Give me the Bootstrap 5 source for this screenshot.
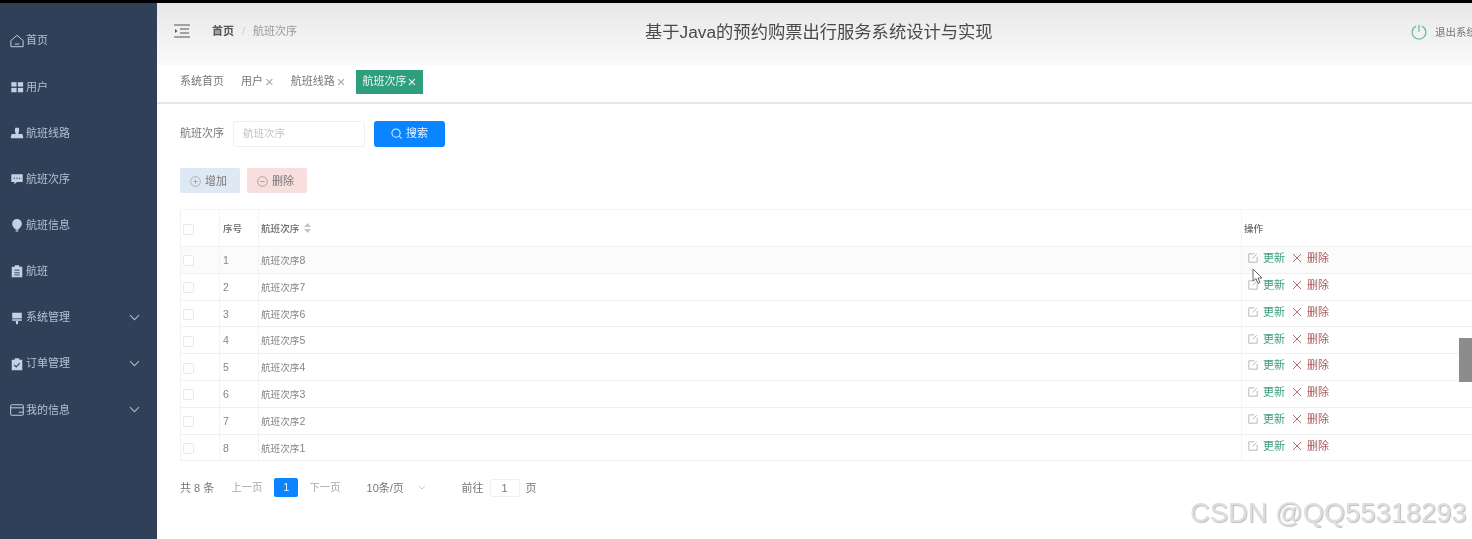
<!DOCTYPE html>
<html lang="zh"><head><meta charset="utf-8"><title>航班次序</title>
<link href="https://cdn.jsdelivr.net/npm/bootstrap@5.3.0/dist/css/bootstrap.min.css" rel="stylesheet">
<style>
html,body{height:539px;overflow:hidden;background:#000}
body{font-family:"Liberation Sans","Noto Sans CJK SC",sans-serif;font-size:11px;color:#6e6e6e;padding-top:3px}
.shell{height:536px;background:#fff;position:relative;overflow:hidden;filter:blur(.35px)}
.side{width:157px;flex:none;background:#2f4058;padding-top:14.6px;color:#b4c1d3}
.side-item{height:46.15px;padding-left:10px;gap:2px}
.side-item svg.ic{width:14px;height:14px;flex:none;color:#c5d1e2}
.side-item .chev{margin-left:auto;margin-right:17px;width:11px;height:7px;color:#a9b6c9}
.main{min-width:0;flex:1 1 0}
.hd{height:62px;background:linear-gradient(#e7e7e7,#fafafa);padding:0 0 6px 17px;flex:none}
.hd-left{width:471px;flex:none}
.crumb-a{font-weight:700;color:#555;margin-left:22px}
.crumb-s{color:#ccc;margin:0 8px}
.crumb-b{color:#9a9a9a}
.ttl{font-size:17.3px;color:#4a4a4a;white-space:nowrap;padding-top:4px}
.logout{width:61px;flex:none;gap:8px;white-space:nowrap;color:#777;font-size:10.5px;padding-top:4px}
.logout svg{flex:none;margin-top:-2px}
.tabsbar{height:39px;border-bottom:2px solid #e6e6e6;padding:5px 0 0 23px;flex:none;color:#777}
.tabi{margin-right:17px;height:24px;padding-bottom:2px}
.tabi b{font-weight:400;color:#aaa;margin-left:2px;font-size:15px;line-height:1}
.tabon{background:#2f9e7c;color:#e6f5f0;padding:0 7px 2px 7px;margin:0 0 0 -7px}
.tabon b{color:#e6f5f0;margin-left:1px}
.body-wrap{padding:17px 0 0 23px}
.lab{margin-right:9px;color:#777;padding-bottom:1px}
.inp{width:132px;height:26px;border:1px solid #f0f0f0;border-radius:3px;padding:0 0 1px 9px;color:#c6c6c6;font-size:10.5px}
.sbtn{width:71px;height:26px;margin-left:9px;background:#0a84ff;color:#e9f3ff;border-radius:3px;gap:4px;padding-bottom:1px}
.abtn{width:60px;height:25px;margin-top:21px;border-radius:2px;gap:4px;color:#777;padding:1px 3px 0 0}
.abtn svg{width:11px;height:11px}
.a-add{background:#dfe9f5}
.a-del{background:#f8dfdd;margin-left:7px}
.gt{margin:16px 0 0;table-layout:fixed;width:1320px;font-size:9.6px;border-left:1px solid #f2f2f2;border-top:1px solid #f4f4f4}
.gt td,.gt th{padding:0 0 0 2px;border-bottom:1px solid #f0f0f0;border-right:1px solid #f4f4f4;vertical-align:middle;color:#858585;font-weight:400;box-shadow:none}
.gt th{height:37px;color:#6a6a6a;font-weight:500;padding-top:2px}
.gt td{height:26.8px;padding-top:2px}
.gt th:nth-child(2),.gt td:nth-child(2){padding-left:3px}
.gt td:nth-child(2),.gt .dg{font-size:10.5px}
.gt tr.hov td{background:#fbfbfb}
.gt td.act{padding:0 0 3px 6px;font-size:11px}
.cb{display:block;width:11px;height:11px;border:1px solid #e9e9e9;border-radius:2px;background:#fff}
.sortm{display:inline-block;margin-left:5px;vertical-align:-1px}
.up{color:#3c9e80}.dn{color:#a9595c}
.act svg{width:10px;height:10px;vertical-align:-1px}
.act .e{color:#aaa;margin-right:5px}
.act .x{color:#a9707a;margin:0 5px 0 7px}
.pg{margin-top:16px;height:21px;color:#777}
.pg .mut{color:#a8a8a8;font-size:10.4px}
.pnum{width:24px;height:19px;background:#0a84ff;color:#e9f3ff;border-radius:2px;margin:0 11px 0 12px;padding-bottom:1px}
.psel{margin-left:26px;width:95px;color:#777}
.psel svg{width:8px;height:5px;margin-left:14px;color:#ccc}
.pin{width:30px;height:18px;border:1px solid #f0f0f0;border-radius:2px;margin:0 6px}
.thumb{position:absolute;right:0;top:335px;width:13px;height:44px;background:#8c8c8c}
.cursor{position:absolute;left:1252px;top:265px;width:11px;height:17px}
.wm{position:absolute;left:1190px;top:493px;font-family:"Liberation Sans",sans-serif;font-size:27.3px;line-height:34px;color:#dedede;white-space:nowrap;text-shadow:1px 1px 1px #bdbdbd;pointer-events:none}
</style></head>
<body>
<div class="shell d-flex">
  <nav class="side">
    <div class="side-item d-flex align-items-center"><svg class="ic" viewBox="0 0 16 16" fill="none" stroke="currentColor" stroke-width="1.1"><path d="M1 7.500 8 1.500l7 6V14.500H1z"/><path d="M5.500 11.500h5"/></svg><span>首页</span></div>
    <div class="side-item d-flex align-items-center"><svg class="ic" viewBox="0 0 16 16" fill="currentColor"><rect x="1.500" y="2.500" width="6" height="5"/><rect x="9" y="2.500" width="6" height="5"/><rect x="1.500" y="9" width="6" height="5"/><rect x="9" y="9" width="6" height="5"/></svg><span>用户</span></div>
    <div class="side-item d-flex align-items-center"><svg class="ic" viewBox="0 0 16 16" fill="currentColor"><path d="M6 2h4l.5 3L9.500 9H14l1 3v2H1v-2l1-3h4.500L5.500 5z"/></svg><span>航班线路</span></div>
    <div class="side-item d-flex align-items-center"><svg class="ic" viewBox="0 0 16 16" fill="currentColor"><path d="M1.500 2.500h13v9H8l-3 2.500v-2.500H1.500z"/><g fill="#2f4058"><circle cx="5" cy="7" r=".8"/><circle cx="8" cy="7" r=".8"/><circle cx="11" cy="7" r=".8"/></g></svg><span>航班次序</span></div>
    <div class="side-item d-flex align-items-center"><svg class="ic" viewBox="0 0 16 16" fill="currentColor"><path d="M8 1a5.500 5.500 0 0 1 5.500 5.500C13.500 10 10 12 9.500 13.500h-3C6 12 2.500 10 2.500 6.500A5.500 5.500 0 0 1 8 1z"/><rect x="6.500" y="14" width="3" height="1.500"/></svg><span>航班信息</span></div>
    <div class="side-item d-flex align-items-center"><svg class="ic" viewBox="0 0 16 16" fill="currentColor"><path d="M5.500 1.500h5v1.500H14v12H2V3h3.500z"/><path d="M5 7h6M5 10h6M5 12.500h6" stroke="#2f4058" stroke-width="1"/></svg><span>航班</span></div>
    <div class="side-item d-flex align-items-center"><svg class="ic" viewBox="0 0 16 16" fill="currentColor"><path d="M2.500 2h11v6.500h-11z"/><path d="M2.500 9.300h11V11h-11zM6.500 11.500h3l-.5 3.500H7z"/></svg><span>系统管理</span><svg class="chev" viewBox="0 0 11 7" fill="none" stroke="currentColor" stroke-width="1.100"><path d="M1 1.200l4.500 4.500L10 1.200"/></svg></div>
    <div class="side-item d-flex align-items-center"><svg class="ic" viewBox="0 0 16 16" fill="currentColor"><path d="M5.500 1.500h5V3H14v12H2V3h3.500z"/><path d="M4.800 9l2.300 2.300 4-4.300" fill="none" stroke="#2f4058" stroke-width="1.200"/></svg><span>订单管理</span><svg class="chev" viewBox="0 0 11 7" fill="none" stroke="currentColor" stroke-width="1.100"><path d="M1 1.200l4.500 4.500L10 1.200"/></svg></div>
    <div class="side-item d-flex align-items-center"><svg class="ic" viewBox="0 0 16 16" fill="none" stroke="currentColor" stroke-width="1.100"><rect x=".8" y="2" width="14.400" height="12" rx="1"/><path d="M.8 5.500h14.400M10 10.500h5"/></svg><span>我的信息</span><svg class="chev" viewBox="0 0 11 7" fill="none" stroke="currentColor" stroke-width="1.100"><path d="M1 1.200l4.500 4.500L10 1.200"/></svg></div>
  </nav>
  <main class="main d-flex flex-column">
    <header class="hd d-flex align-items-center">
      <div class="hd-left d-flex align-items-center">
        <svg width="16" height="14" viewBox="0 0 16 14" fill="none" stroke="#555" stroke-width="1"><path d="M0 1h16M6 5h9M6 9h9M0 13h16"/><path d="M1 5v4l2.500-2z" fill="#555" stroke="none"/></svg>
        <span class="crumb-a">首页</span><span class="crumb-s">/</span><span class="crumb-b">航班次序</span>
      </div>
      <div class="ttl">基于Java的预约购票出行服务系统设计与实现</div>
      <div class="logout d-flex align-items-center ms-auto">
        <svg width="16" height="16" viewBox="0 0 16 16" fill="none" stroke="#6cbca6" stroke-width="1.300"><path d="M5 2.200a6.800 6.800 0 1 0 6 0M8 .8v7"/></svg><span>退出系统</span>
      </div>
    </header>
    <div class="tabsbar d-flex">
      <div class="tabi d-flex align-items-center">系统首页</div>
      <div class="tabi d-flex align-items-center">用户<b>×</b></div>
      <div class="tabi d-flex align-items-center">航班线路<b>×</b></div>
      <div class="tabi tabon d-flex align-items-center">航班次序<b>×</b></div>
    </div>
    <div class="body-wrap">
      <div class="d-flex align-items-center">
        <span class="lab">航班次序</span>
        <div class="inp d-flex align-items-center">航班次序</div>
        <div class="sbtn d-flex align-items-center justify-content-center"><svg width="11" height="11" viewBox="0 0 12 12" fill="none" stroke="currentColor" stroke-width="1.100"><circle cx="5.500" cy="5.500" r="4.500"/><path d="M9 9l2.500 2.500"/></svg><span>搜索</span></div>
      </div>
      <div class="d-flex">
        <div class="abtn a-add d-flex align-items-center justify-content-center"><svg viewBox="0 0 12 12" fill="none" stroke="#9a9a9a" stroke-width=".8"><circle cx="6" cy="6" r="5.300"/><path d="M3.500 6h5M6 3.500v5"/></svg><span>增加</span></div>
        <div class="abtn a-del d-flex align-items-center justify-content-center"><svg viewBox="0 0 12 12" fill="none" stroke="#9a8a8a" stroke-width=".8"><circle cx="6" cy="6" r="5.300"/><path d="M3.500 6h5"/></svg><span>删除</span></div>
      </div>
      <table class="table gt">
        <colgroup><col style="width:39px"><col style="width:39px"><col style="width:983px"><col></colgroup>
        <thead><tr><th><span class="cb"></span></th><th>序号</th><th>航班次序<svg class="sortm" width="7" height="10" viewBox="0 0 7 10" fill="#c4c4c4"><path d="M3.500 0 7 4H0zM3.500 10 0 6h7z"/></svg></th><th>操作</th></tr></thead>
        <tbody id="rows"></tbody>
      </table>
      <div class="pg d-flex align-items-center">
        <span style="margin-right:17px">共 8 条</span><span class="mut">上一页</span>
        <span class="pnum d-flex align-items-center justify-content-center">1</span><span class="mut">下一页</span>
        <span class="psel d-flex align-items-center">10条/页<svg viewBox="0 0 8 5" fill="none" stroke="currentColor"><path d="M1 1l3 3 3-3"/></svg></span>
        <span>前往</span><span class="pin d-flex align-items-center justify-content-center">1</span><span>页</span>
      </div>
    </div>
  </main>
  <div class="thumb"></div>
  <svg class="cursor" viewBox="0 0 11 17" fill="#fff" stroke="#666" stroke-width="1"><path d="M1 1v12l3-2.500 2 5 2-1-2-4.500h4z"/></svg>
  <div class="wm">CSDN @QQ55318293</div>
</div>
<script>
var names=[8,7,6,5,4,3,2,1],h='';
names.forEach(function(n,i){h+='<tr'+(i==0?' class="hov"':'')+'><td><span class="cb"></span></td><td>'+(i+1)+'</td><td>航班次序<span class="dg">'+n+'</span></td><td class="act"><svg class="e" viewBox="0 0 12 12" fill="none" stroke="currentColor"><path d="M7.500 1H1v10h10V4.500M5.500 6.500 10.500 1.500"/></svg><span class="up">更新</span><svg class="x" viewBox="0 0 10 10" fill="none" stroke="currentColor"><path d="M1 1l8 8M9 1l-8 8"/></svg><span class="dn">删除</span></td></tr>';});
document.getElementById('rows').innerHTML=h;
</script>
<script src="https://cdn.jsdelivr.net/npm/bootstrap@5.3.0/dist/js/bootstrap.bundle.min.js"></script>
</body></html>
